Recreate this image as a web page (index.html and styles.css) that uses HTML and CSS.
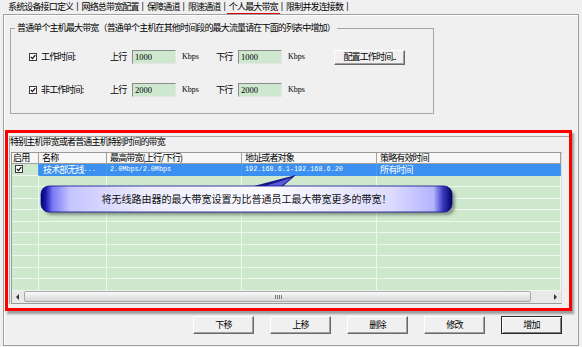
FILE: index.html
```html
<!DOCTYPE html>
<html>
<head>
    <meta charset="utf-8">
    <title>个人最大带宽</title>
    <link rel="stylesheet" href="styles.css">
</head>
<body>
<div class="tabs">
    <span class="tab">系统设备接口定义</span><span class="sep">|</span>
    <span class="tab">网络总带宽配置</span><span class="sep">|</span>
    <span class="tab">保障通道</span><span class="sep">|</span>
    <span class="tab">限速通道</span><span class="sep">|</span>
    <span class="tab active">个人最大带宽</span><span class="sep">|</span>
    <span class="tab">限制并发连接数</span><span class="sep">|</span>
</div>
<div class="panel">
    <fieldset class="group">
        <legend>普通单个主机最大带宽（普通单个主机在其他时间段的最大流量请在下面的列表中增加）</legend>
        <div class="rows">
            <div class="row">
                <span class="check"><svg width="6" height="6" viewBox="0 0 6 6"><path d="M0.8 2.9 L2.4 4.6 L5.3 1.1" fill="none" stroke="#111" stroke-width="1.3"/></svg></span>
                <span class="label">工作时间:</span>
                <span class="dir">上行</span>
                <span class="input">1000</span>
                <span class="unit">Kbps</span>
                <span class="dir">下行</span>
                <span class="input">1000</span>
                <span class="unit">Kbps</span>
                <button class="btn wide">配置工作时间..</button>
            </div>
            <div class="row">
                <span class="check"><svg width="6" height="6" viewBox="0 0 6 6"><path d="M0.8 2.9 L2.4 4.6 L5.3 1.1" fill="none" stroke="#111" stroke-width="1.3"/></svg></span>
                <span class="label">非工作时间:</span>
                <span class="dir">上行</span>
                <span class="input">2000</span>
                <span class="unit">Kbps</span>
                <span class="dir">下行</span>
                <span class="input">2000</span>
                <span class="unit">Kbps</span>
            </div>
        </div>
    </fieldset>

    <div class="highlight">
        <div class="sub">
            <div class="title">特别主机带宽或者普通主机特别时间的带宽</div>
            <div class="list">
                <div class="thead">
                    <span class="first">启用</span>
                    <span>名称</span>
                    <span>最高带宽(上行/下行)</span>
                    <span>地址或者对象</span>
                    <span>策略有效时间</span>
                </div>
                <div class="tr sel">
                    <span><i class="check small"><svg width="6" height="6" viewBox="0 0 6 6"><path d="M0.8 2.9 L2.4 4.6 L5.3 1.1" fill="none" stroke="#111" stroke-width="1.3"/></svg></i></span>
                    <span class="name">技术部无线<b class="mono">...</b></span>
                    <span class="mono">2.0Mbps/2.0Mbps</span>
                    <span class="mono">192.168.6.1-192.168.6.20</span>
                    <span>所有时间</span>
                </div>
                <div class="tr"><span></span><span></span><span></span><span></span><span></span></div>
                <div class="tr"><span></span><span></span><span></span><span></span><span></span></div>
                <div class="tr"><span></span><span></span><span></span><span></span><span></span></div>
                <div class="tr"><span></span><span></span><span></span><span></span><span></span></div>
                <div class="tr"><span></span><span></span><span></span><span></span><span></span></div>
                <div class="tr"><span></span><span></span><span></span><span></span><span></span></div>
                <div class="tr"><span></span><span></span><span></span><span></span><span></span></div>
                <div class="tr"><span></span><span></span><span></span><span></span><span></span></div>
                <div class="tr"><span></span><span></span><span></span><span></span><span></span></div>
                <div class="tr"><span></span><span></span><span></span><span></span><span></span></div>
                <div class="hscroll">
                    <span class="arrow left"></span>
                    <span class="thumb"></span>
                    <span class="arrow right"></span>
                </div>

                <!-- 提示气泡 -->
                <div class="callout">
                    <svg width="428" height="48" viewBox="0 0 428 48">
                        <defs>
                            <linearGradient id="cg" x1="0" y1="0" x2="1" y2="0">
                                <stop offset="0" stop-color="#000070"/>
                                <stop offset="0.012" stop-color="#1c1cb0"/>
                                <stop offset="0.028" stop-color="#7878f4"/>
                                <stop offset="0.07" stop-color="#c4c4ff"/>
                                <stop offset="0.25" stop-color="#ececff"/>
                                <stop offset="0.55" stop-color="#fafaff"/>
                                <stop offset="0.85" stop-color="#dcdcff"/>
                                <stop offset="0.955" stop-color="#b4b4ff"/>
                                <stop offset="0.978" stop-color="#3a3ac0"/>
                                <stop offset="1" stop-color="#00005e"/>
                            </linearGradient>
                            <filter id="blur" x="-5%" y="-30%" width="110%" height="160%">
                                <feGaussianBlur stdDeviation="1.4"/>
                            </filter>
                        </defs>
                        <rect x="8" y="19" width="411" height="26" rx="8" fill="#000" opacity="0.35" filter="url(#blur)"/>
                        <polygon points="214,17 260,5 246,17" fill="#16168a"/>
                        <polygon points="226,17 256,7.5 244,17" fill="#5a5ad8"/>
                        <rect x="5" y="16" width="411" height="26" rx="8" fill="url(#cg)" stroke="#10108a" stroke-width="0.8"/>
                    </svg>
                    <p>将无线路由器的最大带宽设置为比普通员工最大带宽更多的带宽！</p>
                </div>
            </div>
        </div>
    </div>

    <div class="actions">
        <button class="btn">下移</button>
        <button class="btn">上移</button>
        <button class="btn">删除</button>
        <button class="btn">修改</button>
        <button class="btn default">增加</button>
    </div>
</div>
</body>
</html>
```

FILE: styles.css
```css
* {
    box-sizing: border-box;
}

body {
    margin: 0;
    width: 582px;
    height: 347px;
    overflow: hidden;
    background: #f0f0f0;
    color: #000;
    font-family: "Noto Sans CJK SC", sans-serif;
    font-size: 9px;
    letter-spacing: -0.85px;
    line-height: 10px;
}

.tabs {
    display: flex;
    height: 14px;
    padding-left: 6px;
}

.tab {
    height: 14px;
    line-height: 13px;
    padding: 0 2px;
}

.tab.active {
    border-bottom: 1px solid #e00000;
}

.sep {
    margin: 0 1px;
    font-family: "Liberation Sans", sans-serif;
    font-size: 9px;
    line-height: 13px;
    letter-spacing: 0;
    color: #222;
}

.panel {
    margin-left: 3px;
    width: 576px;
    height: 332px;
    border: 1px solid #a0a0a0;
    box-shadow: inset 1px 1px 0 #fff;
}

.group {
    margin: 8px 0 0 6px;
    padding: 0;
    width: 424px;
    border: 1px solid #a6a6a6;
}

.group legend {
    margin-left: 4px;
    padding: 0 2px;
    line-height: 10px;
}

.rows {
    padding: 17px 0 16px;
}

.row {
    display: flex;
    align-items: center;
    height: 14px;
}

.row + .row {
    margin-top: 19px;
}

.check {
    display: flex;
    align-items: center;
    justify-content: center;
    width: 8px;
    height: 8px;
    margin-left: 18px;
    border: 1px solid #3a3a3a;
    background: #fff;
}

.check.small {
    margin: 0 0 0 3px;
}

.label {
    width: 69px;
    margin-left: 4px;
}

.dir {
    width: 22px;
}

.input {
    width: 44px;
    height: 14px;
    padding-left: 2px;
    border: 1px solid;
    border-color: #8a8a8a #e4e4e4 #e4e4e4 #8a8a8a;
    background: #cde8cf;
    font-family: "Liberation Serif", serif;
    font-size: 8.5px;
    letter-spacing: 0;
    line-height: 12px;
}

.unit {
    width: 34px;
    margin-left: 6px;
    font-family: "Liberation Serif", serif;
    font-size: 8px;
    letter-spacing: 0;
}

.btn {
    height: 18px;
    padding: 0;
    font: inherit;
    letter-spacing: inherit;
    color: #000;
    background: #f0f0f0;
    border: 1px solid;
    border-color: #fff #696969 #696969 #fff;
    box-shadow: inset -1px -1px 0 #a0a0a0;
}

.btn.wide {
    width: 71px;
    height: 15px;
    margin-left: 12px;
}

.btn.default {
    border-color: #2a2a2a;
    box-shadow: inset 1px 1px 0 #fff, inset -1px -1px 0 #808080;
}

.highlight {
    margin: 16px 0 0 1px;
    width: 567px;
    height: 181px;
    border: 3px solid #ff0000;
    box-shadow: 2px 3px 2px rgba(0, 0, 0, .35);
}

.sub {
    margin: 3px 0 0 1px;
    border-left: 1px solid #a6a6a6;
    border-top: 1px solid #a6a6a6;
}

.title {
    height: 9px;
    line-height: 9px;
}

.list {
    position: relative;
    margin: 6px 0 0 1px;
    width: 551px;
    border: 1px solid #9a9a9a;
    border-right-color: #dcdcdc;
}

.thead,
.tr {
    display: grid;
    grid-template-columns: 27px 68px 135px 135px 1fr;
}

.thead {
    height: 11px;
    border-bottom: 1px solid #a0a0a0;
    background: #f7f7f7;
}

.thead span {
    padding-left: 3px;
    border-right: 1px solid #a0a0a0;
    line-height: 9px;
    white-space: nowrap;
}

.thead .first {
    padding-left: 1px;
}

.tr {
    height: 11.5px;
}

.tr span {
    display: flex;
    align-items: center;
    padding-left: 3px;
    background: #cde8cd;
    border-right: 1px solid #eef7ee;
    border-bottom: 1px solid #eef7ee;
    line-height: 9px;
    white-space: nowrap;
}

.tr.sel span {
    background: #3a8ff0;
    color: #fff;
    border-right-color: #4c99f2;
    border-bottom-color: #3a8ff0;
}

.tr.sel span:first-child {
    padding-left: 0;
    background: #cde8cd;
    border-bottom-color: #eef7ee;
}

.tr.sel .name {
    padding-left: 4px;
}

.mono,
.tr.sel .mono {
    font-family: "Liberation Mono", monospace;
    font-size: 6.8px;
    letter-spacing: 0;
    font-weight: normal;
}

.hscroll {
    display: flex;
    align-items: center;
    height: 12px;
    background: #e9e9e9;
}

.arrow {
    position: relative;
    width: 12px;
    height: 12px;
}

.arrow.left::after,
.arrow.right::after {
    content: "";
    position: absolute;
    top: 3px;
    border: 3px solid transparent;
}

.arrow.left::after {
    left: 1px;
    border-right: 3px solid #333;
}

.arrow.right {
    margin-left: auto;
}

.arrow.right::after {
    left: 5px;
    border-left: 3px solid #333;
}

.thumb {
    position: relative;
    width: 507px;
    height: 11px;
    border: 1px solid #a8a8a8;
    border-radius: 2px;
    background: linear-gradient(#fbfbfb, #e6e6e6 55%, #d6d6d6);
}

.thumb::after {
    content: "";
    position: absolute;
    left: 250px;
    top: 3px;
    width: 7px;
    height: 4px;
    background: repeating-linear-gradient(90deg, #777 0 1px, transparent 1px 2px);
}

.callout {
    position: absolute;
    left: 24px;
    top: 17px;
    width: 428px;
    height: 48px;
}

.callout svg {
    position: absolute;
    left: 0;
    top: 0;
}

.callout p {
    position: absolute;
    left: 5px;
    top: 16px;
    width: 411px;
    margin: 0;
    line-height: 26px;
    text-align: center;
    font-size: 10px;
    letter-spacing: 0;
    color: #111;
}

.actions {
    display: flex;
    justify-content: flex-end;
    gap: 16px;
    margin-top: 5px;
    padding-right: 16px;
}

.actions .btn {
    width: 61px;
}
```
